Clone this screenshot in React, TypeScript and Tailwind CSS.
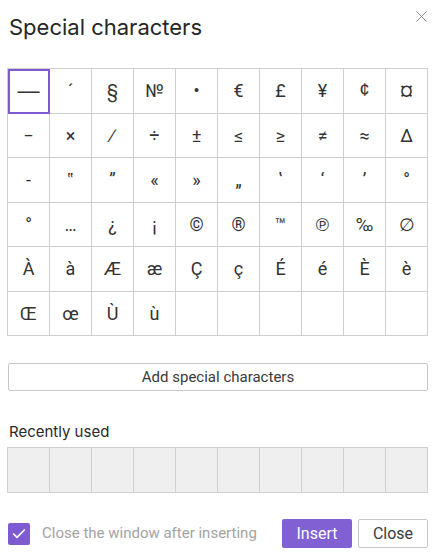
import { X, Check } from 'lucide-react'

const chars = [
  '—', '´', '§', '№', '•', '€', '£', '¥', '¢', '¤',
  '−', '×', '∕', '÷', '±', '≤', '≥', '≠', '≈', 'Δ',
  '-', '‟', '”', '«', '»', '„', '‛', '‘', '’', '°',
  '°', '…', '¿', '¡', '©', '®', '™', '℗', '‰', '∅',
  'À', 'à', 'Æ', 'æ', 'Ç', 'ç', 'É', 'é', 'È', 'è',
  'Œ', 'œ', 'Ù', 'ù', '', '', '', '', '', '',
]

const cell = 'h-[44.5px] flex items-center justify-center border-r border-b border-[#cfcfcf]'

export default function App() {
  return (
    <div className="w-[440px] h-[552px] bg-white relative px-[7px] font-['Inter',sans-serif] text-[#222]">
      <button className="absolute right-[9px] top-[7px] text-[#888]" aria-label="Close">
        <X className="w-[19px] h-[19px]" strokeWidth={1.2} />
      </button>
      <h1 className="pt-[13px] pl-[2px] text-[22px] leading-[28px] text-[#262626]">Special characters</h1>

      <div className="mt-[27px] grid grid-cols-10 w-[421px] border-l border-t border-[#cfcfcf] font-['Roboto',sans-serif] text-[#333]">
        {chars.map((c, i) => {
          let cls = cell + ' text-[18px]'
          if (i === 0) cls = cell + " text-[22px] font-['Liberation_Sans',sans-serif] outline-2 -outline-offset-2 outline-[#7e5bd3]"
          if (i === 8) cls = cell + " text-[18px] font-['Liberation_Sans',sans-serif]"
          return (
            <div key={i} className={cls}>
              {c}
            </div>
          )
        })}
      </div>

      <button className="mt-[27px] ml-px w-[420px] h-[28px] border border-[#c8c8c8] rounded-[2px] text-[15px] font-['Roboto',sans-serif] text-[#3a3a3a]">
        Add special characters
      </button>

      <div className="mt-[31px] pl-[2px] text-[15px] leading-[20px] text-[#2a2a2a]">Recently used</div>
      <div className="mt-[5px] grid grid-cols-10 w-[421px] border-l border-t border-[#cfcfcf] bg-[#efefef]">
        {Array.from({ length: 10 }).map((_, i) => (
          <div key={i} className="h-[45px] border-r border-b border-[#cfcfcf]" />
        ))}
      </div>

      <div className="mt-[26px] mr-[5px] flex items-center font-['Roboto',sans-serif]">
        <div className="ml-px w-[22px] h-[22px] rounded-[2px] bg-[#7e5bd3] flex items-center justify-center">
          <Check className="w-[16px] h-[16px] text-white" strokeWidth={2.5} />
        </div>
        <span className="ml-[12px] text-[15px] text-[#a3a3a3]">Close the window after inserting</span>
        <button className="ml-auto w-[70px] h-[29px] rounded-[2px] bg-[#8060d3] text-white text-[16px]">Insert</button>
        <button className="ml-[6px] w-[70px] h-[29px] rounded-[2px] border border-[#c8c8c8] text-[16px] text-[#3a3a3a]">Close</button>
      </div>
    </div>
  )
}
